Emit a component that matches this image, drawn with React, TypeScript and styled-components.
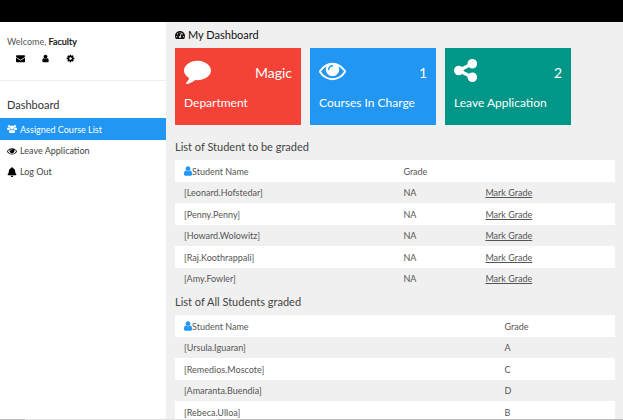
import React from "react";
import styled, { createGlobalStyle } from "styled-components";
import { FaBell, FaTachometerAlt } from "react-icons/fa";

const GlobalStyle = createGlobalStyle`
  * { box-sizing: border-box; }
  body {
    margin: 0;
    overflow: hidden;
    background: #f0f0f0;
    color: #555;
    font: 9px/13px Lato, "Open Sans", sans-serif;
  }
`;

const Page = styled.div`
  display: flex;
  flex-direction: column;
  height: 100vh;
`;

const TopBar = styled.header`
  flex: 0 0 22px;
  background: #000;
`;

const Body = styled.div`
  display: grid;
  grid-template-columns: 166px minmax(0, 1fr);
  flex: 1;
  min-height: 0;
`;

const Sidebar = styled.aside`
  background: #fff;
`;

const Profile = styled.section`
  height: 59px;
  padding: 13px 7px 0;
  border-bottom: 1px solid #f0f0f0;
`;

const Strong = styled.strong`
  color: #111;
  font-weight: 500;
  -webkit-text-stroke: 0.2px #111;
`;

const ProfileActions = styled.div`
  display: flex;
  gap: 7px;
  margin-top: 1px;
  padding-left: 4px;
`;

const IconButton = styled.button`
  display: flex;
  align-items: center;
  justify-content: center;
  width: 18px;
  height: 18px;
  padding: 0;
  border: 0;
  background: none;
  color: #000;
`;

const MenuTitle = styled.h2`
  margin: 16px 7px 5px;
  color: #333;
  font-size: 11px;
  line-height: 16px;
  font-weight: 400;
`;

const MenuLink = styled.a<{ $active?: boolean }>`
  display: flex;
  align-items: center;
  gap: 3px;
  height: ${(p) => (p.$active ? 22 : 21)}px;
  padding: 0 7px;
  background: ${(p) => (p.$active ? "#2196f3" : "transparent")};
  color: ${(p) => (p.$active ? "#fff" : "#444")};
  text-decoration: none;

  svg {
    color: ${(p) => (p.$active ? "#fff" : "#000")};
  }
`;

const Main = styled.main`
  min-width: 0;
  padding: 5px 8px 0 9px;
  overflow: hidden;
`;

const PageTitle = styled.h1`
  display: flex;
  align-items: center;
  gap: 3px;
  margin: 0 0 5px;
  color: #111;
  font-size: 11px;
  line-height: 16px;
  font-weight: 400;
`;

const Cards = styled.div`
  display: grid;
  grid-template-columns: repeat(3, minmax(0, 126px));
  gap: 9px;
`;

const Card = styled.article<{ $color: string }>`
  display: flex;
  flex-direction: column;
  justify-content: space-between;
  height: 77px;
  padding: 9px 9px 14px;
  background: ${(p) => p.$color};
  color: #fff;
`;

const CardTop = styled.div`
  display: flex;
  justify-content: space-between;
`;

const CardValue = styled.span`
  margin-top: 6px;
  font-size: 14px;
  line-height: 20px;
`;

const CardLabel = styled.h3`
  margin: 0;
  font-size: 12px;
  line-height: 16px;
  font-weight: 400;
`;

const SectionTitle = styled.h2`
  margin: 14px 0 5px;
  color: #444;
  font-size: 11px;
  line-height: 16px;
  font-weight: 400;

  table + & {
    margin-top: 5px;
  }
`;

const Table = styled.table`
  width: 100%;
  border-collapse: collapse;
  table-layout: fixed;
`;

const Row = styled.tr`
  height: 21px;

  &:nth-child(odd) {
    height: 22px;
    background: #fff;
  }
`;

const Cell = styled.td<{ $width?: string }>`
  width: ${(p) => p.$width ?? "auto"};
  padding: 0 4px;
  text-align: left;
  font-weight: 400;

  &:first-child {
    padding-left: 9px;
  }
`;

const NameLabel = styled.span`
  display: flex;
  align-items: center;

  svg {
    color: #2196f3;
  }
`;

const GradeLink = styled.a`
  color: inherit;
  text-decoration: underline;
`;

const BottomEdge = styled.footer`
  flex: 0 0 1px;
  background: linear-gradient(90deg, #bbb 4%, #e0e0e0 4% 35%, #bbb 35%);
`;

const PATHS = {
  envelope:
    "M1792 710v794q0 66-47 113t-113 47h-1472q-66 0-113-47t-47-113v-794q44 49 101 87 362 246 497 345 57 42 92.5 65.5t94.5 48 110 24.5h2q51 0 110-24.5t94.5-48 92.5-65.5q170-123 498-345 57-39 100-87zm0-294q0 79-49 151t-122 123q-376 261-468 325-10 7-42.5 31t-54 38.5-52 32.5-57.5 27-50 9h-2q-23 0-50-9t-57.5-27-52-32.5-54-38.5-42.5-31q-91-64-262-182.5t-205-142.5q-62-42-117-115.5t-55-136.5q0-78 41.5-130t118.5-52h1472q65 0 112.5 47t47.5 113z",
  user: "M1536 1399q0 109-62.5 187t-150.5 78h-854q-88 0-150.5-78t-62.5-187q0-85 8.5-160.5t31.5-152 58.5-131 94-89 134.5-34.5q131 128 313 128t313-128q76 0 134.5 34.5t94 89 58.5 131 31.5 152 8.5 160.5zm-256-887q0 159-112.5 271.5t-271.5 112.5-271.5-112.5-112.5-271.5 112.5-271.5 271.5-112.5 271.5 112.5 112.5 271.5z",
  cog: "M1152 896q0-106-75-181t-181-75-181 75-75 181 75 181 181 75 181-75 75-181zm512-109v222q0 12-8 23t-20 13l-185 28q-19 54-39 91 35 50 107 138 10 12 10 25t-9 23q-27 37-99 108t-94 71q-12 0-26-9l-138-108q-44 23-91 38-16 136-29 186-7 28-36 28h-222q-14 0-24.5-8.5t-11.5-21.5l-28-184q-49-16-90-37l-141 107q-10 9-25 9-14 0-25-11-126-114-165-168-7-10-7-23 0-12 8-23 15-21 51-66.5t54-70.5q-27-50-41-99l-183-27q-13-2-21-12.5t-8-23.5v-222q0-12 8-23t19-13l186-28q14-46 39-92-40-57-107-138-10-12-10-24 0-10 9-23 26-36 98.5-107.5t94.5-71.5q13 0 26 10l138 107q44-23 91-38 16-136 29-186 7-28 36-28h222q14 0 24.5 8.5t11.5 21.5l28 184q49 16 90 37l142-107q9-9 24-9 13 0 25 10 129 119 165 170 7 8 7 22 0 12-8 23-15 21-51 66.5t-54 70.5q26 50 41 98l183 28q13 2 21 12.5t8 23.5z",
  comment:
    "M1792 896q0 174-120 321.5t-326 233-450 85.5q-70 0-145-8-198 175-460 242-49 14-114 22-17 2-30.5-9t-17.5-29v-1q-3-4-.5-12t2-10 4.5-9.5l6-9 7-8.5 8-9q7-8 31-34.5t34.5-38 31-39.5 32.5-51 27-59 26-76q-157-89-247.5-220t-90.5-281q0-130 71-248.5t191-204.5 286-136.5 348-50.5q244 0 450 85.5t326 233 120 321.5z",
  eye: "M1664 960q-152-236-381-353 61 104 61 225 0 185-131.5 316.5t-316.5 131.5-316.5-131.5-131.5-316.5q0-121 61-225-229 117-381 353 133 205 333.5 326.5t434.5 121.5 434.5-121.5 333.5-326.5zm-720-384q0-20-14-34t-34-14q-125 0-214.5 89.5t-89.5 214.5q0 20 14 34t34 14 34-14 14-34q0-86 61-147t147-61q20 0 34-14t14-34zm848 384q0 34-20 69-140 230-376.5 368.5t-499.5 138.5-499.5-139-376.5-368q-20-35-20-69t20-69q140-229 376.5-368t499.5-139 499.5 139 376.5 368q20 35 20 69z",
  share:
    "M1344 1024q133 0 226.5 93.5t93.5 226.5-93.5 226.5-226.5 93.5-226.5-93.5-93.5-226.5q0-12 2-34l-360-180q-92 86-218 86-133 0-226.5-93.5t-93.5-226.5 93.5-226.5 226.5-93.5q126 0 218 86l360-180q-2-22-2-34 0-133 93.5-226.5t226.5-93.5 226.5 93.5 93.5 226.5-93.5 226.5-226.5 93.5q-126 0-218-86l-360 180q2 22 2 34t-2 34l360 180q92-86 218-86z",
  users:
    "M380 200a230 230 0 1 0 1 0zM1412 200a230 230 0 1 0 1 0zM896 290a340 340 0 1 0 1 0zM130 670Q250 740 500 670Q490 860 610 960Q450 970 360 1070H170Q0 1070 0 900Q0 670 130 670zM1662 670Q1542 740 1292 670Q1302 860 1182 960Q1342 970 1432 1070H1622Q1792 1070 1792 900Q1792 670 1662 670zM560 1010Q896 1190 1232 1010Q1450 1040 1450 1430Q1450 1630 1260 1630H532Q342 1630 342 1430Q342 1040 560 1010z",
};

type IconName = keyof typeof PATHS;

interface IconProps {
  name: IconName;
  width?: number;
  height?: number;
  viewBox?: string;
}

function Icon({ name, width = 10, height = width, viewBox = "0 0 1792 1792" }: IconProps) {
  return (
    <svg width={width} height={height} viewBox={viewBox} fill="currentColor" aria-hidden="true">
      <path d={PATHS[name]} />
    </svg>
  );
}

const cards: { color: string; icon: IconName; value: string; label: string; viewBox?: string }[] = [
  { color: "#f44336", icon: "comment", value: "Magic", label: "Department" },
  { color: "#2196f3", icon: "eye", value: "1", label: "Courses In Charge" },
  { color: "#009688", icon: "share", value: "2", label: "Leave Application", viewBox: "128 0 1792 1792" },
];

const pending = ["[Leonard.Hofstedar]", "[Penny.Penny]", "[Howard.Wolowitz]", "[Raj.Koothrappali]", "[Amy.Fowler]"];

const graded = [
  ["[Ursula.Iguaran]", "A"],
  ["[Remedios.Moscote]", "C"],
  ["[Amaranta.Buendia]", "D"],
  ["[Rebeca.Ulloa]", "B"],
];

function StudentHeading() {
  return (
    <NameLabel>
      <Icon name="user" width={8} height={10} viewBox="256 128 1280 1536" />
      Student Name
    </NameLabel>
  );
}

export default function App() {
  return (
    <Page>
      <GlobalStyle />
      <TopBar />
      <Body>
        <Sidebar>
          <Profile>
            <div>
              Welcome, <Strong>Faculty</Strong>
            </div>
            <ProfileActions>
              <IconButton aria-label="Messages"><Icon name="envelope" width={9} /></IconButton>
              <IconButton aria-label="Profile"><Icon name="user" width={9} /></IconButton>
              <IconButton aria-label="Settings"><Icon name="cog" width={9} /></IconButton>
            </ProfileActions>
          </Profile>
          <MenuTitle>Dashboard</MenuTitle>
          <nav>
            <MenuLink href="#courses" $active>
              <Icon name="users" />
              Assigned Course List
            </MenuLink>
            <MenuLink href="#leave">
              <Icon name="eye" />
              Leave Application
            </MenuLink>
            <MenuLink href="#logout">
              <FaBell size={10} />
              Log Out
            </MenuLink>
          </nav>
        </Sidebar>
        <Main>
          <PageTitle>
            <FaTachometerAlt size={10} />
            My Dashboard
          </PageTitle>
          <Cards>
            {cards.map((card) => (
              <Card key={card.label} $color={card.color}>
                <CardTop>
                  <Icon name={card.icon} width={27} viewBox={card.viewBox} />
                  <CardValue>{card.value}</CardValue>
                </CardTop>
                <CardLabel>{card.label}</CardLabel>
              </Card>
            ))}
          </Cards>
          <SectionTitle>List of Student to be graded</SectionTitle>
          <Table>
            <tbody>
              <Row>
                <Cell as="th" scope="col" $width="51%"><StudentHeading /></Cell>
                <Cell as="th" scope="col" $width="82px">Grade</Cell>
                <Cell />
              </Row>
              {pending.map((name) => (
                <Row key={name}>
                  <Cell>{name}</Cell>
                  <Cell>NA</Cell>
                  <Cell><GradeLink href="#grade">Mark Grade</GradeLink></Cell>
                </Row>
              ))}
            </tbody>
          </Table>
          <SectionTitle>List of All Students graded</SectionTitle>
          <Table>
            <tbody>
              <Row>
                <Cell as="th" scope="col" $width="74%"><StudentHeading /></Cell>
                <Cell as="th" scope="col">Grade</Cell>
              </Row>
              {graded.map(([name, grade]) => (
                <Row key={name}>
                  <Cell>{name}</Cell>
                  <Cell>{grade}</Cell>
                </Row>
              ))}
            </tbody>
          </Table>
        </Main>
      </Body>
      <BottomEdge />
    </Page>
  );
}
